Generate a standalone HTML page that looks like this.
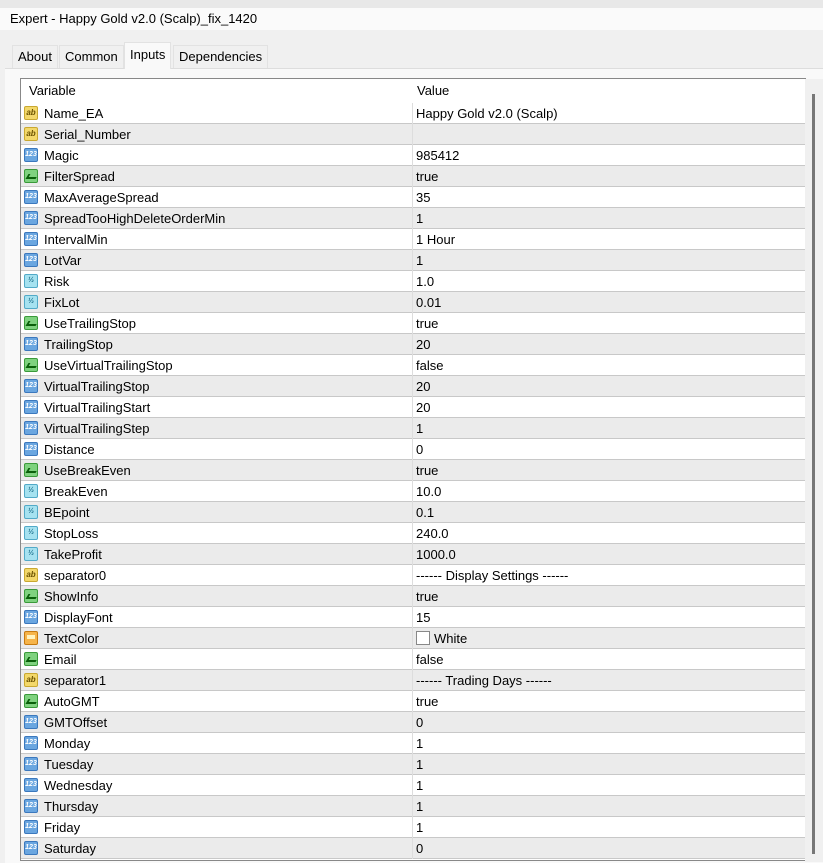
<!DOCTYPE html><html><head><style>
body{margin:0;width:823px;height:862px;background:#f0f0f0;font-family:"Liberation Sans",sans-serif;font-size:13px;color:#000;position:relative;overflow:hidden}
.top{position:absolute;left:0;top:0;width:823px;height:8px;background:#e8e8e8;border-bottom:1px solid #ccc}
.title{position:absolute;left:0;top:8px;width:823px;height:22px;background:#fafafa;}
.title span{position:absolute;left:10px;top:3px}
.tab{position:absolute;top:45px;height:22px;line-height:22px;padding:0 5px;background:#f0f0f0;border:1px solid #e2e2e2;border-bottom:none}
.tab.sel{top:42px;height:26px;line-height:24px;background:#f9f9f9}
.panel{position:absolute;left:5px;top:68px;width:818px;height:794px;background:#f9f9f9;border-top:1px solid #ddd}
.list{position:absolute;left:20px;top:78px;width:784px;height:781px;background:#fff;border:1px solid #888;overflow:hidden}
.hdr{height:24px;position:relative}
.hdr span{position:absolute;top:4px}
.row{height:20px;border-bottom:1px solid #c8c8c8;position:relative}
.row.g{background:#ebebeb}
.row .n{position:absolute;left:23px;top:3px}
.row .v{position:absolute;left:395px;top:3px}
.row:after{content:"";position:absolute;left:391px;top:0;width:1px;height:21px;background:#ddd}
.ic{position:absolute;left:3px;top:3px;width:14px;height:14px;border-radius:2px;font-size:8px;line-height:14px;text-align:center;font-weight:bold}
.ab{background:#f3d86a;color:#6b5200;border:1px solid #c9a830;width:12px;height:12px;line-height:12px}
.nm{background:#6aa6e0;color:#fff;border:1px solid #3b78bd;width:12px;height:12px;line-height:12px;font-size:7px}
.bo{background:#7fd27f;border:1px solid #3a9a3a;width:12px;height:12px}
.bo:before{content:"";position:absolute;left:2px;top:4px;width:8px;height:3px;border-bottom:2px solid #0a600a;border-left:2px solid #0a600a;transform:skewX(-30deg)}
.db{background:#a6e2f0;color:#1b6f8a;border:1px solid #52aac8;width:12px;height:12px;line-height:12px;font-size:7px}
.co{background:#f6b44a;border:1px solid #c67a10;width:12px;height:12px}
.co:before{content:"";position:absolute;left:2px;top:3px;width:8px;height:4px;background:#fff3c0}
.sw{display:inline-block;width:12px;height:12px;border:1px solid #888;background:#fff;vertical-align:-2px;margin-right:4px}
.sb{position:absolute;left:805px;top:79px;width:18px;height:783px;background:#f0f0f0}
.sb div{position:absolute;left:7px;top:15px;width:3px;height:760px;background:#777}
</style></head><body>
<div class="top"></div>
<div class="title"><span>Expert - Happy Gold v2.0 (Scalp)_fix_1420</span></div>
<div class="panel"></div>
<div class="tab" style="left:12px">About</div>
<div class="tab" style="left:59px">Common</div>
<div class="tab sel" style="left:124px">Inputs</div>
<div class="tab" style="left:173px">Dependencies</div>
<div class="list">
<div class="hdr"><span style="left:8px">Variable</span><span style="left:396px">Value</span></div>
<div class="row"><i class="ic ab">ab</i><span class="n">Name_EA</span><span class="v">Happy Gold v2.0 (Scalp)</span></div>
<div class="row g"><i class="ic ab">ab</i><span class="n">Serial_Number</span><span class="v"></span></div>
<div class="row"><i class="ic nm">123</i><span class="n">Magic</span><span class="v">985412</span></div>
<div class="row g"><i class="ic bo"></i><span class="n">FilterSpread</span><span class="v">true</span></div>
<div class="row"><i class="ic nm">123</i><span class="n">MaxAverageSpread</span><span class="v">35</span></div>
<div class="row g"><i class="ic nm">123</i><span class="n">SpreadTooHighDeleteOrderMin</span><span class="v">1</span></div>
<div class="row"><i class="ic nm">123</i><span class="n">IntervalMin</span><span class="v">1 Hour</span></div>
<div class="row g"><i class="ic nm">123</i><span class="n">LotVar</span><span class="v">1</span></div>
<div class="row"><i class="ic db">½</i><span class="n">Risk</span><span class="v">1.0</span></div>
<div class="row g"><i class="ic db">½</i><span class="n">FixLot</span><span class="v">0.01</span></div>
<div class="row"><i class="ic bo"></i><span class="n">UseTrailingStop</span><span class="v">true</span></div>
<div class="row g"><i class="ic nm">123</i><span class="n">TrailingStop</span><span class="v">20</span></div>
<div class="row"><i class="ic bo"></i><span class="n">UseVirtualTrailingStop</span><span class="v">false</span></div>
<div class="row g"><i class="ic nm">123</i><span class="n">VirtualTrailingStop</span><span class="v">20</span></div>
<div class="row"><i class="ic nm">123</i><span class="n">VirtualTrailingStart</span><span class="v">20</span></div>
<div class="row g"><i class="ic nm">123</i><span class="n">VirtualTrailingStep</span><span class="v">1</span></div>
<div class="row"><i class="ic nm">123</i><span class="n">Distance</span><span class="v">0</span></div>
<div class="row g"><i class="ic bo"></i><span class="n">UseBreakEven</span><span class="v">true</span></div>
<div class="row"><i class="ic db">½</i><span class="n">BreakEven</span><span class="v">10.0</span></div>
<div class="row g"><i class="ic db">½</i><span class="n">BEpoint</span><span class="v">0.1</span></div>
<div class="row"><i class="ic db">½</i><span class="n">StopLoss</span><span class="v">240.0</span></div>
<div class="row g"><i class="ic db">½</i><span class="n">TakeProfit</span><span class="v">1000.0</span></div>
<div class="row"><i class="ic ab">ab</i><span class="n">separator0</span><span class="v">------ Display Settings ------</span></div>
<div class="row g"><i class="ic bo"></i><span class="n">ShowInfo</span><span class="v">true</span></div>
<div class="row"><i class="ic nm">123</i><span class="n">DisplayFont</span><span class="v">15</span></div>
<div class="row g"><i class="ic co"></i><span class="n">TextColor</span><span class="v"><i class="sw"></i>White</span></div>
<div class="row"><i class="ic bo"></i><span class="n">Email</span><span class="v">false</span></div>
<div class="row g"><i class="ic ab">ab</i><span class="n">separator1</span><span class="v">------ Trading Days ------</span></div>
<div class="row"><i class="ic bo"></i><span class="n">AutoGMT</span><span class="v">true</span></div>
<div class="row g"><i class="ic nm">123</i><span class="n">GMTOffset</span><span class="v">0</span></div>
<div class="row"><i class="ic nm">123</i><span class="n">Monday</span><span class="v">1</span></div>
<div class="row g"><i class="ic nm">123</i><span class="n">Tuesday</span><span class="v">1</span></div>
<div class="row"><i class="ic nm">123</i><span class="n">Wednesday</span><span class="v">1</span></div>
<div class="row g"><i class="ic nm">123</i><span class="n">Thursday</span><span class="v">1</span></div>
<div class="row"><i class="ic nm">123</i><span class="n">Friday</span><span class="v">1</span></div>
<div class="row g"><i class="ic nm">123</i><span class="n">Saturday</span><span class="v">0</span></div>
</div>
<div class="sb"><div></div></div>
</body></html>
